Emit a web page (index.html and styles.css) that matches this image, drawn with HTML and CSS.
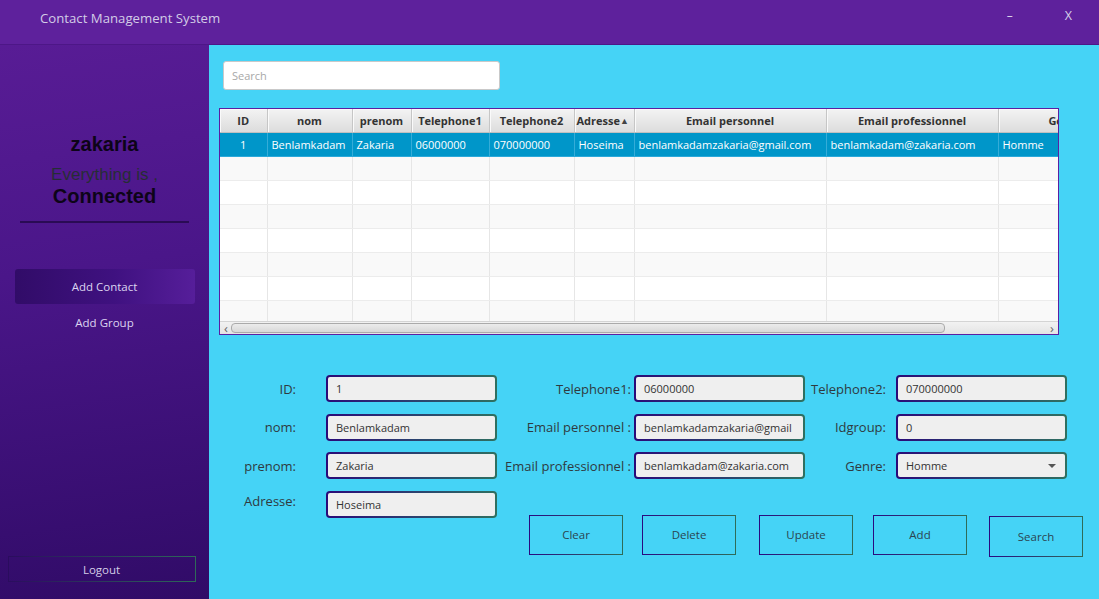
FILE: index.html
```html
<!DOCTYPE html>
<html lang="fr">
<head>
<meta charset="utf-8">
<title>Contact Management System</title>
<link rel="stylesheet" href="styles.css">
</head>
<body>
<div class="app">
  <header class="titlebar">
    <span class="title">Contact Management System</span>
    <div class="winctl">
      <span class="min">–</span>
      <span class="close">X</span>
    </div>
  </header>
  <div class="content">
    <aside class="sidebar">
      <div class="user">zakaria</div>
      <div class="status-line">Everything is ,</div>
      <div class="status">Connected</div>
      <div class="divider"></div>
      <nav class="nav">
        <div class="nav-item active">Add Contact</div>
        <div class="nav-item">Add Group</div>
      </nav>
      <div class="logout">Logout</div>
    </aside>
    <main class="main">
      <div class="search">Search</div>
      <div class="table-wrap">
        <div class="table-view">
          <table class="grid">
            <colgroup>
              <col class="c-id"><col class="c-nom"><col class="c-prenom"><col class="c-tel1"><col class="c-tel2"><col class="c-adr"><col class="c-ep"><col class="c-epro"><col class="c-genre">
            </colgroup>
            <thead>
              <tr>
                <th>ID</th><th>nom</th><th>prenom</th><th>Telephone1</th><th>Telephone2</th><th class="sorted">Adresse<span class="sort">▲</span></th><th>Email personnel</th><th>Email professionnel</th><th class="genre-h">Genre</th>
              </tr>
            </thead>
            <tbody>
              <tr class="selected">
                <td class="center">1</td><td>Benlamkadam</td><td>Zakaria</td><td>06000000</td><td>070000000</td><td>Hoseima</td><td>benlamkadamzakaria@gmail.com</td><td>benlamkadam@zakaria.com</td><td>Homme</td>
              </tr>
              <tr class="odd"><td></td><td></td><td></td><td></td><td></td><td></td><td></td><td></td><td></td></tr>
              <tr><td></td><td></td><td></td><td></td><td></td><td></td><td></td><td></td><td></td></tr>
              <tr class="odd"><td></td><td></td><td></td><td></td><td></td><td></td><td></td><td></td><td></td></tr>
              <tr><td></td><td></td><td></td><td></td><td></td><td></td><td></td><td></td><td></td></tr>
              <tr class="odd"><td></td><td></td><td></td><td></td><td></td><td></td><td></td><td></td><td></td></tr>
              <tr><td></td><td></td><td></td><td></td><td></td><td></td><td></td><td></td><td></td></tr>
              <tr class="odd"><td></td><td></td><td></td><td></td><td></td><td></td><td></td><td></td><td></td></tr>
            </tbody>
          </table>
        </div>
        <div class="hscroll">
          <span class="arrow">‹</span>
          <div class="track"><div class="thumb"></div></div>
          <span class="arrow">›</span>
        </div>
      </div>

      <div class="form">
        <label class="lbl l1">ID:</label>
        <div class="field">1</div>
        <label class="lbl l2">Telephone1:</label>
        <div class="field">06000000</div>
        <label class="lbl l3">Telephone2:</label>
        <div class="field">070000000</div>

        <label class="lbl l1">nom:</label>
        <div class="field">Benlamkadam</div>
        <label class="lbl l2">Email personnel :</label>
        <div class="field">benlamkadamzakaria@gmail</div>
        <label class="lbl l3">Idgroup:</label>
        <div class="field">0</div>

        <label class="lbl l1">prenom:</label>
        <div class="field">Zakaria</div>
        <label class="lbl l2">Email professionnel :</label>
        <div class="field">benlamkadam@zakaria.com</div>
        <label class="lbl l3">Genre:</label>
        <div class="field combo">Homme<span class="caret"></span></div>

        <label class="lbl l1 adr">Adresse:</label>
        <div class="field">Hoseima</div>
        <div class="actions">
          <button class="btn b-clear">Clear</button>
          <button class="btn b-delete">Delete</button>
          <button class="btn b-update">Update</button>
          <button class="btn b-add">Add</button>
          <button class="btn btn-search">Search</button>
        </div>
      </div>
    </main>
  </div>
</div>
</body>
</html>
```

FILE: styles.css
```css
* { box-sizing: border-box; }

html, body {
  margin: 0;
  padding: 0;
  background: #45d3f6;
}

body {
  font-family: "Open Sans", "Noto Sans", sans-serif;
  color: #333;
}

.app {
  width: 1099px;
  height: 599px;
  display: grid;
  grid-template-rows: 45px 1fr;
  overflow: hidden;
}

/* Title bar */
.titlebar {
  background: #5e219c;
  border-bottom: 1px solid #4d1787;
  display: flex;
  align-items: flex-start;
  padding: 8px 27px 0 40px;
}

.title {
  font-size: 13.2px;
  color: #d2cbe6;
  line-height: 20px;
}

.winctl {
  margin-left: auto;
  display: flex;
  gap: 52px;
  color: #d8d2ea;
  font-size: 12px;
  line-height: 16px;
}

.min { font-size: 12px; }
.close { font-size: 12.5px; }

.content {
  display: grid;
  grid-template-columns: 209px 1fr;
  min-height: 0;
}

/* Sidebar */
.sidebar {
  background: linear-gradient(172deg, #581c95 0%, #4a1689 40%, #300b67 100%);
  display: flex;
  flex-direction: column;
  align-items: center;
  padding-top: 88px;
  padding-bottom: 17px;
}

.user {
  font-family: "Liberation Sans", Arial, sans-serif;
  font-weight: bold;
  font-size: 20px;
  line-height: 23px;
  color: #0d0418;
}

.status-line {
  font-family: "Liberation Sans", Arial, sans-serif;
  font-size: 17px;
  line-height: 20px;
  margin-top: 9px;
  color: rgba(30, 50, 36, 0.85);
}

.status {
  font-family: "Liberation Sans", Arial, sans-serif;
  font-weight: bold;
  font-size: 20px;
  line-height: 23px;
  margin-top: 0;
  color: #0d0418;
}

.divider {
  width: 169px;
  height: 2px;
  background: #2a0b55;
  margin-top: 13px;
}

.nav {
  width: 180px;
  margin-top: 46px;
  display: flex;
  flex-direction: column;
}

.nav-item {
  height: 35px;
  display: flex;
  align-items: center;
  justify-content: center;
  font-size: 11.5px;
  color: #dcd5f0;
}

.nav-item.active {
  background: linear-gradient(90deg, #310c68 0%, #3f1180 55%, #561e9a 100%);
  border-radius: 3px;
}

.nav-item + .nav-item {
  height: 36px;
}

.logout {
  margin-top: auto;
  width: 188px;
  height: 26px;
  margin-left: -6px;
  border: 1px solid transparent;
  border-image: linear-gradient(90deg, #2a0c5e, #2e6a58) 1;
  display: flex;
  align-items: center;
  justify-content: center;
  font-size: 11.5px;
  color: #d4cde8;
}

/* Main */
.main {
  padding: 16px 0 0 10px;
  display: flex;
  flex-direction: column;
  align-items: flex-start;
}

.search {
  margin-left: 4px;
  width: 277px;
  height: 29px;
  background: #fff;
  border: 1px solid #c9c9c9;
  border-radius: 3px;
  font-size: 11px;
  color: #a8a8a8;
  padding: 0 8px;
  display: flex;
  align-items: center;
}

.table-wrap {
  margin-top: 18px;
  width: 840px;
  height: 227px;
  border: 1px solid #5b1fa2;
  background: #fff;
  display: flex;
  flex-direction: column;
}

.table-view {
  height: 212px;
  overflow: hidden;
}

.grid {
  border-collapse: collapse;
  table-layout: fixed;
  width: 912px;
  font-size: 11px;
}

.c-id { width: 47px; }
.c-nom { width: 85px; }
.c-prenom { width: 59px; }
.c-tel1 { width: 78px; }
.c-tel2 { width: 85px; }
.c-adr { width: 60px; }
.c-ep { width: 192px; }
.c-epro { width: 172px; }
.c-genre { width: 134px; }

.grid th {
  height: 23px;
  padding: 0;
  font-weight: bold;
  color: #333;
  background: linear-gradient(#f3f3f3, #dcdcdc);
  border-right: 1px solid #c6c6c6;
  border-bottom: 1px solid #c0c0c0;
  box-shadow: inset 1px 1px 0 #fafafa;
  white-space: nowrap;
  overflow: hidden;
  text-align: center;
}

.grid th.sorted {
  text-align: left;
  padding-left: 2px;
}

.sort {
  font-size: 9px;
  vertical-align: 1px;
  color: #444;
}

.grid td {
  height: 24px;
  padding: 0 4px;
  border-right: 1px solid #e6e6e6;
  border-bottom: 1px solid #ececec;
  white-space: nowrap;
  overflow: hidden;
}

.grid td.center { text-align: center; }

.grid tr.odd td { background: #f9f9f9; }

.grid tr.selected td {
  background: #0096c9;
  color: #fff;
  border-right-color: #35acd8;
  border-top: 1px solid #2aa9da;
  border-bottom: 1px solid #2aa9da;
}

.hscroll {
  height: 13px;
  border-top: 1px solid #d4d4d4;
  background: linear-gradient(#f2f2f2, #e4e4e4);
  display: flex;
  align-items: center;
  padding: 0 2px;
}

.arrow {
  width: 8px;
  font-size: 13px;
  line-height: 11px;
  color: #666;
  text-align: center;
}

.track {
  flex: 1;
  height: 11px;
  padding-left: 1px;
}

.thumb {
  width: 714px;
  height: 10px;
  border: 1px solid #aaa;
  border-radius: 4px;
  background: linear-gradient(#ececec, #d8d8d8);
}

/* Form */
.form {
  margin-top: 40px;
  display: grid;
  grid-template-columns: 107px 171px 137px 171px 91px 171px;
  grid-template-rows: repeat(4, 27px);
  row-gap: 11.67px;
}

.lbl {
  display: flex;
  align-items: center;
  justify-content: flex-end;
  font-size: 13px;
  color: #2f3a3f;
  white-space: nowrap;
}

.l1 { padding-right: 30px; }
.l2 { padding-right: 3px; }
.l3 { padding-right: 10px; }
.lbl.adr { align-items: flex-start; padding-top: 1px; }

.field {
  height: 27px;
  border: 2px solid transparent;
  border-radius: 4px;
  background:
    linear-gradient(#efefef, #efefef) padding-box,
    linear-gradient(90deg, #2a0a78 0%, #2b3f70 50%, #2f7060 100%) border-box;
  font-size: 11px;
  color: #333;
  padding: 0 8px;
  display: flex;
  align-items: center;
  white-space: nowrap;
  overflow: hidden;
}

.field.combo {
  position: relative;
}

.caret {
  position: absolute;
  right: 9px;
  top: 10px;
  width: 0;
  height: 0;
  border-left: 4px solid transparent;
  border-right: 4px solid transparent;
  border-top: 4px solid #555;
}

.actions {
  grid-column: 3 / 7;
  align-self: start;
  margin-top: 24px;
  padding-left: 32px;
  display: flex;
  width: 600px;
}

.btn {
  flex: 0 0 94px;
  width: 94px;
  height: 40px;
  background: transparent;
  border: 1px solid transparent;
  border-image: linear-gradient(90deg, #2a0a80, #2e6d58) 1;
  font-family: "Open Sans", "Noto Sans", sans-serif;
  font-size: 11.5px;
  color: #2b4550;
  padding: 0;
}

.b-delete { margin-left: 19px; }
.b-update { margin-left: 23px; }
.b-add { margin-left: 20px; }

.btn-search {
  margin-left: 22px;
  height: 41px;
  margin-top: 1px;
}
```
